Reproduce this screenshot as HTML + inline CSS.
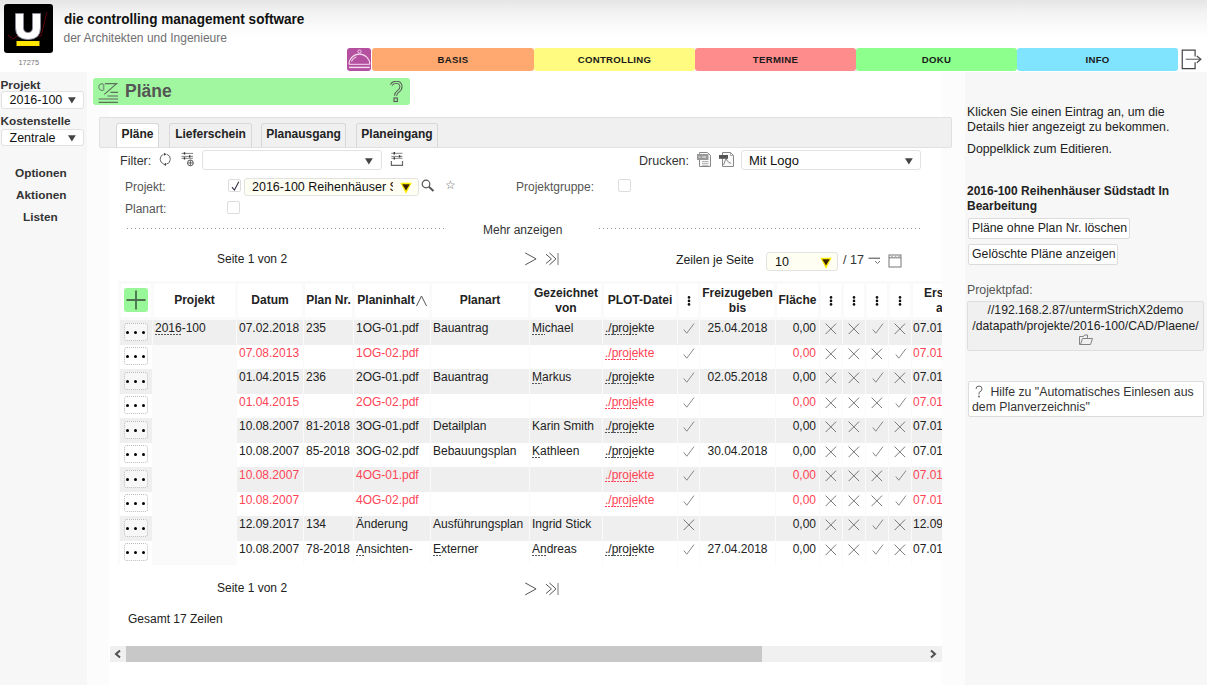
<!DOCTYPE html><html><head><meta charset="utf-8"><style>
*{box-sizing:border-box;margin:0;padding:0}
html,body{width:1207px;height:685px;overflow:hidden;background:#fff}
body{font-family:"Liberation Sans",sans-serif;font-size:12px;color:#222;position:relative}
.a{position:absolute;white-space:nowrap}
#hdr{position:absolute;left:0;top:0;width:1207px;height:76px;background:linear-gradient(#e5e5e5 0px,#f2f2f2 12px,#fbfbfb 28px,#fff 40px)}
#logo{position:absolute;left:4px;top:4px;width:49px;height:49px;background:#000;border-radius:3px;overflow:hidden}
.ttl{font-weight:bold;font-size:15.5px;color:#111;transform-origin:0 0;transform:scaleX(0.875)}
.sub{font-size:12px;color:#707070}
.nt{position:absolute;top:48px;height:23px;border-radius:3px;font-weight:bold;font-size:9.6px;color:#1a1a1a;text-align:center;line-height:24px;letter-spacing:0.3px}
.sel{position:absolute;background:#fff;border:1px solid #e2e2e2;border-radius:3px;font-size:13px;color:#111}
.sb{font-weight:bold;font-size:11.8px;color:#333;z-index:2}
.tab{position:absolute;top:4.5px;height:24.5px;border:1px solid #d8d8d8;border-bottom:none;border-radius:3px 3px 0 0;background:#f0f0f0;font-weight:bold;font-size:12px;color:#222;text-align:center;line-height:20px}
.btn{position:absolute;background:#fff;border:1px solid #dcdcdc;border-radius:2px;font-size:12.3px;color:#222;line-height:18px;padding-left:3px;white-space:nowrap}
.lbl{position:absolute;white-space:nowrap;font-size:12px;color:#555}
.cb{position:absolute;width:13px;height:13px;border:1px solid #ddd;border-radius:2px;background:#fff}
.dl{position:absolute;height:1px;background:repeating-linear-gradient(90deg,#999 0 1px,transparent 1px 4px)}
.tc{position:absolute;overflow:hidden;white-space:nowrap}
.hc{position:absolute;background:#fff;font-weight:bold;font-size:12px;color:#222;text-align:center;line-height:15px;display:flex;align-items:center;justify-content:center}
.red{color:#ff4455}
.u{background:repeating-linear-gradient(90deg,#555 0 2px,transparent 2px 3px) 0 100%/100% 1px no-repeat}
.red .u{background-image:repeating-linear-gradient(90deg,#ff4455 0 2px,transparent 2px 3px)}
.dots{position:absolute;width:24px;height:18px;border:1px dotted #bbb;border-radius:3px;background:#fff}
.dots i{position:absolute;top:7px;width:3.2px;height:3.2px;border-radius:50%;background:#000}
</style></head><body>
<div id="hdr"></div>
<div id="logo"><svg width="49" height="49" viewBox="0 0 49 49">
<polyline points="4,31 9,35 15,31 24,29 31,31 37,32 43,8" fill="none" stroke="#7a0010" stroke-width="0.8"/>
<path d="M11.5 9.5 h8 v14 q0 5 4.5 5 q4.5 0 4.5-5 v-14 h8 v14 q0 12 -12.5 12 q-12.5 0 -12.5 -12z" fill="#fff" stroke="#8a8a9a" stroke-width="0.9"/>
<rect x="12.5" y="37" width="23" height="5" fill="#ffe600"/>
</svg></div>
<div class="a" style="left:18.5px;top:57.5px;font-size:7.4px;color:#777">17275</div>
<div class="a ttl" style="left:63.5px;top:9.7px">die controlling management software</div>
<div class="a sub" style="left:63.5px;top:31px">der Architekten und Ingenieure</div>
<div class="nt" style="left:347px;width:24px;background:#b54fa0"><svg width="24" height="23" viewBox="0 0 24 23" style="position:absolute;left:0;top:0"><path d="M2 16.3 A10.4 10.2 0 0 1 22.8 16.3" fill="none" stroke="#f3ddee" stroke-width="1.1"/><line x1="2" y1="16.3" x2="22.8" y2="16.3" stroke="#f3ddee" stroke-width="1"/><line x1="2" y1="19.4" x2="22.8" y2="19.4" stroke="#f3ddee" stroke-width="1.4"/><circle cx="12.5" cy="3.6" r="1.6" fill="none" stroke="#f3ddee" stroke-width="0.9"/><path d="M4.4 13.4 A8 8 0 0 1 9.3 8.8" fill="none" stroke="#e8c0e0" stroke-width="1.3"/></svg></div>
<div class="nt" style="left:372px;width:162px;background:#ffa870">BASIS</div>
<div class="nt" style="left:534px;width:161px;background:#fffb80">CONTROLLING</div>
<div class="nt" style="left:695px;width:161px;background:#ff8c8c">TERMINE</div>
<div class="nt" style="left:856px;width:161px;background:#8cff8c">DOKU</div>
<div class="nt" style="left:1017px;width:161px;background:#80e4ff">INFO</div>
<svg class="a" style="left:1181px;top:49px" width="22" height="22" viewBox="0 0 22 22"><path d="M14.1 7.6 V1.2 H1.25 V19.6 H14.1 V13.2" fill="none" stroke="#444" stroke-width="1.2"/><line x1="4.75" y1="10.25" x2="19.6" y2="10.25" stroke="#666" stroke-width="1.1"/><path d="M15.8 7 L19.9 10.25 L15.8 13.75" fill="none" stroke="#444" stroke-width="1.1"/></svg>
<div class="a" style="left:0;top:72px;width:87px;height:613px;background:#f7f7f7"></div>
<div class="a" style="left:87px;top:72px;width:22px;height:613px;background:#fcfcfc"></div>
<div class="a" style="left:942px;top:72px;width:23px;height:613px;background:#fcfcfc"></div>
<div class="a" style="left:965px;top:72px;width:242px;height:613px;background:#f7f7f7"></div>
<div class="a sb" style="left:0.5px;top:77.5px">Projekt</div>
<div class="sel" style="left:0.5px;top:91px;width:83px;height:17.5px;font-size:12.5px"><span class="a" style="left:8px;top:1px">2016-100</span><svg class="a" style="left:66px;top:5px" width="8" height="7" viewBox="0 0 8 7"><path d="M0 0.2 H7.8 L3.9 6.6z" fill="#444"/></svg></div>
<div class="a sb" style="left:0.5px;top:113.5px">Kostenstelle</div>
<div class="sel" style="left:0.5px;top:128.5px;width:83px;height:17.5px;font-size:12.5px"><span class="a" style="left:8px;top:1px">Zentrale</span><svg class="a" style="left:66px;top:5px" width="8" height="7" viewBox="0 0 8 7"><path d="M0 0.2 H7.8 L3.9 6.6z" fill="#444"/></svg></div>
<div class="a sb" style="left:15px;top:166px">Optionen</div>
<div class="a sb" style="left:16px;top:188px">Aktionen</div>
<div class="a sb" style="left:23px;top:210px">Listen</div>
<div class="a" style="left:93px;top:78px;width:317px;height:27px;background:#a0f7a0;border-radius:3px">
<svg class="a" style="left:0;top:0" width="30" height="27" viewBox="0 0 30 27"><path d="M12 5.6 H23.6 L11.3 16.4" fill="none" stroke="#5c705c" stroke-width="1.2"/><path d="M10.6 5.8 V12.6" stroke="#7c9a7c" stroke-width="1.6"/><path d="M9.8 5.6 A3.9 3.4 0 0 0 9.8 12.6" fill="none" stroke="#6c846c" stroke-width="1.1"/><path d="M17.4 14.4 H25 M5.6 24.4 H25" stroke="#5c705c" stroke-width="1.1"/><path d="M14.4 17.9 H25 M5.6 20.9 H25" stroke="#789478" stroke-width="1.5"/></svg>
<div class="a" style="left:32px;top:3px;font-size:17.5px;font-weight:bold;color:#555">Pläne</div>
<svg class="a" style="left:296px;top:3px" width="14" height="22" viewBox="0 0 14 22"><path d="M2.2 4 Q4 1.3 7 1.3 Q12 1.3 12 5.8 Q12 8.5 9 10.5 Q6.6 12.2 6.6 14.8" fill="none" stroke="#555" stroke-width="3.1"/><path d="M2.2 4 Q4 1.3 7 1.3 Q12 1.3 12 5.8 Q12 8.5 9 10.5 Q6.6 12.2 6.6 14.8" fill="none" stroke="#a0f7a0" stroke-width="1.2"/><rect x="5" y="17" width="3.3" height="3.5" fill="#a0f7a0" stroke="#555" stroke-width="1.1"/></svg>
</div>
<div class="a" style="left:99px;top:117px;width:853px;height:31px;background:#f0f0f0;border:1px solid #e0e0e0;border-radius:2px">
<div class="tab" style="left:16px;width:43px;background:#fff">Pläne</div>
<div class="tab" style="left:69px;width:83px">Lieferschein</div>
<div class="tab" style="left:161px;width:85px">Planausgang</div>
<div class="tab" style="left:256px;width:82px">Planeingang</div>
</div>
<div class="a" style="left:120px;top:153.5px;font-size:12.5px;color:#333">Filter:</div>
<svg class="a" style="left:158px;top:152px" width="14" height="15" viewBox="0 0 14 15"><path d="M5.5 2.3 A5.2 5.2 0 0 0 5.8 12.1 M8.8 2.2 A5.2 5.2 0 0 1 8.3 12.2" fill="none" stroke="#666" stroke-width="1"/><path d="M6 0.8 L8.5 2.3 L6 3.8z M8 10.8 L5.6 12.5 L8 14z" fill="#444"/></svg>
<svg class="a" style="left:181px;top:151px" width="14" height="16" viewBox="0 0 14 16"><path d="M0.5 2.4 H12 M0.5 5.4 H12 M0.5 7.3 H12" stroke="#777" stroke-width="0.9"/><path d="M3.5 1.2 V3.6 M8.7 4.2 V6.5 M3.5 6.2 V8.6" stroke="#333" stroke-width="1.4"/><circle cx="9.4" cy="11.9" r="2.9" fill="#fff" stroke="#555" stroke-width="1"/><path d="M9.4 9.3 V14.5 M6.8 11.9 H12" stroke="#555" stroke-width="0.9"/></svg>
<div class="sel" style="left:202px;top:150px;width:180px;height:20px"><svg class="a" style="left:162px;top:6.5px" width="8" height="7" viewBox="0 0 8 7"><path d="M0 0.2 H7.8 L3.9 6.6z" fill="#444"/></svg></div>
<svg class="a" style="left:390px;top:151px" width="14" height="16" viewBox="0 0 14 16"><path d="M1.3 2.3 H12.5 M1.3 5.4 H12.5 M1.3 7.3 H12.5" stroke="#777" stroke-width="0.9"/><path d="M4.3 1.1 V3.5 M9.6 4.2 V6.5 M4.3 6.2 V8.6" stroke="#333" stroke-width="1.4"/><path d="M1.4 10 V14.4 H12.5 V10" fill="none" stroke="#666" stroke-width="1.2"/></svg>
<div class="a" style="left:639px;top:154px;font-size:12.5px;color:#333">Drucken:</div>
<svg class="a" style="left:696px;top:151px" width="16" height="17" viewBox="0 0 16 17"><path d="M3.5 1.5 H11.5 L14.5 4.5 V15.5 H3.5z" fill="#fafafa" stroke="#888" stroke-width="1"/><rect x="1" y="3" width="11.5" height="6" fill="#999"/><path d="M2.5 6 h2 M6 6 h2 M9 5 v2" stroke="#eee" stroke-width="1.2"/><path d="M6 10.5 H12.5 M6 12.4 H12.5 M6 14.3 H12.5" stroke="#aaa" stroke-width="0.9"/></svg>
<svg class="a" style="left:718px;top:151px" width="17" height="17" viewBox="0 0 17 17"><path d="M4.5 1.5 H12.5 L15.5 4.5 V15.5 H4.5z" fill="#fafafa" stroke="#888" stroke-width="1"/><path d="M12.5 1.5 V4.5 H15.5" fill="none" stroke="#999" stroke-width="0.8"/><rect x="1" y="4" width="9" height="3.8" fill="#555"/><path d="M5.5 14 Q7.5 9 8 7.5 Q9 11 13 12.5" fill="none" stroke="#777" stroke-width="0.9"/></svg>
<div class="sel" style="left:741px;top:150px;width:180px;height:20px"><span class="a" style="left:7px;top:2px;font-size:13px">Mit Logo</span><svg class="a" style="left:162.5px;top:6.5px" width="8" height="7" viewBox="0 0 8 7"><path d="M0 0.2 H7.8 L3.9 6.6z" fill="#444"/></svg></div>
<div class="lbl" style="left:125px;top:180px">Projekt:</div>
<div class="cb" style="left:227.5px;top:179.3px"><svg class="a" style="left:-1px;top:-1px" width="14" height="14" viewBox="0 0 14 14"><path d="M4 8.2 L6.4 11 L10.8 2.8" fill="none" stroke="#334" stroke-width="1.1"/></svg></div>
<div class="sel" style="left:243.5px;top:178px;width:175.5px;height:17.5px;background:#fffef2;overflow:hidden"><span class="a" style="left:7.5px;top:1px;font-size:12.5px;color:#111">2016-100 Reihenhäuser Südstadt</span><span class="a" style="left:148px;top:0;width:26px;height:20px;background:#fffef2"></span><svg class="a" style="left:155.5px;top:2.5px" width="12" height="12" viewBox="0 0 12 12"><path d="M0.3 0.8 H11.7 L6 11.8z" fill="#ffee00"/><path d="M2.2 2.2 H9.8 L6 8.6z" fill="#3a2400"/></svg></div>
<svg class="a" style="left:421px;top:179px" width="14" height="13" viewBox="0 0 14 13"><circle cx="5" cy="5" r="3.8" fill="none" stroke="#555" stroke-width="1.2"/><path d="M7.8 7.8 L12.5 12" stroke="#555" stroke-width="2"/></svg>
<div class="a" style="left:445px;top:178px;font-size:12px;color:#666">&#9734;</div>
<div class="lbl" style="left:516px;top:180px">Projektgruppe:</div>
<div class="cb" style="left:618px;top:179px"></div>
<div class="lbl" style="left:125px;top:202px">Planart:</div>
<div class="cb" style="left:227px;top:201px"></div>
<div class="dl" style="left:127px;top:228px;width:320px"></div>
<div class="a" style="left:483px;top:223px;font-size:12px;color:#333">Mehr anzeigen</div>
<div class="dl" style="left:599px;top:228px;width:322px"></div>
<div class="a" style="left:217px;top:252px;font-size:12px;color:#222">Seite 1 von 2</div>
<svg class="a" style="left:522px;top:252.2px" width="40" height="15" viewBox="0 0 40 15"><path d="M3.2 0.9 L14.1 6.9 L3.2 12.9" fill="none" stroke="#555" stroke-width="1"/><path d="M24 2.2 L29.4 6.9 L24 11.5 M27.4 0.9 L34 6.9 L27.4 12.9" fill="none" stroke="#555" stroke-width="1"/><path d="M36 0.9 V12.9" stroke="#aaa" stroke-width="1.6"/></svg>
<div class="a" style="left:676px;top:253px;font-size:12.3px;color:#222">Zeilen je Seite</div>
<div class="sel" style="left:766px;top:252px;width:72px;height:19px;background:#fffef2"><span class="a" style="left:8px;top:2px;font-size:12.5px;color:#111">10</span><svg class="a" style="left:53px;top:4px" width="12" height="12" viewBox="0 0 12 12"><path d="M0.3 0.8 H11.7 L6 11.8z" fill="#ffee00"/><path d="M2.2 2.2 H9.8 L6 8.6z" fill="#3a2400"/></svg></div>
<div class="a" style="left:843px;top:253px;font-size:12.5px;color:#333">/ 17</div>
<svg class="a" style="left:868px;top:256px" width="13" height="9" viewBox="0 0 13 9"><path d="M0.5 2.2 H12" stroke="#444" stroke-width="1"/><path d="M7 5 L9.5 7.5 L12 5" fill="none" stroke="#666" stroke-width="0.9"/></svg>
<svg class="a" style="left:888px;top:254px" width="14" height="14" viewBox="0 0 14 14"><rect x="1" y="1" width="12" height="12" fill="none" stroke="#777" stroke-width="1"/><path d="M1 3.8 H13" stroke="#777"/><path d="M3 2.3 H5 M6.5 2.3 H8.5 M10 2.3 H12" stroke="#aaa"/></svg>
<div class="a" style="left:110px;top:240px;width:832px;height:420px;overflow:hidden">
<div class="a" style="left:8px;top:41px;width:900px;height:284px;background:#fafafa"></div>
<div class="hc" style="left:11px;top:44px;width:30px;height:33px;"></div>
<div class="hc" style="left:44px;top:44px;width:81px;height:33px;">Projekt</div>
<div class="hc" style="left:128px;top:44px;width:64px;height:33px;">Datum</div>
<div class="hc" style="left:195px;top:44px;width:47px;height:33px;">Plan Nr.</div>
<div class="hc" style="left:245px;top:44px;width:74px;height:33px;">Planinhalt <svg width="11" height="11" viewBox="0 0 11 11" style="margin-left:1px"><path d="M0.5 11 L5.5 1 L10.5 11" fill="none" stroke="#555" stroke-width="1"/></svg></div>
<div class="hc" style="left:322px;top:44px;width:96px;height:33px;">Planart</div>
<div class="hc" style="left:421px;top:44px;width:70px;height:33px;">Gezeichnet<br>von</div>
<div class="hc" style="left:494px;top:44px;width:72px;height:33px;">PLOT-Datei</div>
<div class="hc" style="left:569px;top:44px;width:19px;height:33px;"><svg width="4" height="10" viewBox="0 0 4 10"><circle cx="2" cy="1.4" r="1.3" fill="#111"/><circle cx="2" cy="4.9" r="1.3" fill="#111"/><circle cx="2" cy="8.4" r="1.3" fill="#111"/></svg></div>
<div class="hc" style="left:591px;top:44px;width:73px;height:33px;">Freizugeben<br>bis</div>
<div class="hc" style="left:667px;top:44px;width:41px;height:33px;">Fläche</div>
<div class="hc" style="left:711px;top:44px;width:20px;height:33px;"><svg width="4" height="10" viewBox="0 0 4 10"><circle cx="2" cy="1.4" r="1.3" fill="#111"/><circle cx="2" cy="4.9" r="1.3" fill="#111"/><circle cx="2" cy="8.4" r="1.3" fill="#111"/></svg></div>
<div class="hc" style="left:734px;top:44px;width:20px;height:33px;"><svg width="4" height="10" viewBox="0 0 4 10"><circle cx="2" cy="1.4" r="1.3" fill="#111"/><circle cx="2" cy="4.9" r="1.3" fill="#111"/><circle cx="2" cy="8.4" r="1.3" fill="#111"/></svg></div>
<div class="hc" style="left:757px;top:44px;width:20px;height:33px;"><svg width="4" height="10" viewBox="0 0 4 10"><circle cx="2" cy="1.4" r="1.3" fill="#111"/><circle cx="2" cy="4.9" r="1.3" fill="#111"/><circle cx="2" cy="8.4" r="1.3" fill="#111"/></svg></div>
<div class="hc" style="left:780px;top:44px;width:20px;height:33px;"><svg width="4" height="10" viewBox="0 0 4 10"><circle cx="2" cy="1.4" r="1.3" fill="#111"/><circle cx="2" cy="4.9" r="1.3" fill="#111"/><circle cx="2" cy="8.4" r="1.3" fill="#111"/></svg></div>
<div class="hc" style="left:803px;top:44px;width:38px;height:33px;justify-content:flex-start;text-align:right;"></div>
<div class="a" style="left:814px;top:46px;font-weight:bold;font-size:12px;line-height:15px;color:#222">Ers</div><div class="a" style="left:826px;top:61px;font-weight:bold;font-size:12px;line-height:15px;color:#222">a</div>
<div class="a" style="left:14px;top:48px;width:24px;height:24px;background:#98f798;border-radius:3px"><svg width="24" height="24" viewBox="0 0 24 24" style="position:absolute;left:0;top:0"><path d="M12 2.5 v19 M2.5 12 h19" stroke="#4d6e4d" stroke-width="1.8"/></svg></div>
<div class="tc" style="left:10px;top:80.0px;width:32px;height:24.5px;background:#efefef"></div>
<div class="tc" style="left:43px;top:80.0px;width:83px;height:24.5px;background:#efefef"></div>
<div class="tc" style="left:127px;top:80.0px;width:66px;height:24.5px;background:#efefef"></div>
<div class="tc" style="left:194px;top:80.0px;width:49px;height:24.5px;background:#efefef"></div>
<div class="tc" style="left:244px;top:80.0px;width:76px;height:24.5px;background:#efefef"></div>
<div class="tc" style="left:321px;top:80.0px;width:98px;height:24.5px;background:#efefef"></div>
<div class="tc" style="left:420px;top:80.0px;width:72px;height:24.5px;background:#efefef"></div>
<div class="tc" style="left:493px;top:80.0px;width:74px;height:24.5px;background:#efefef"></div>
<div class="tc" style="left:568px;top:80.0px;width:21px;height:24.5px;background:#efefef"></div>
<div class="tc" style="left:590px;top:80.0px;width:75px;height:24.5px;background:#efefef"></div>
<div class="tc" style="left:666px;top:80.0px;width:43px;height:24.5px;background:#efefef"></div>
<div class="tc" style="left:710px;top:80.0px;width:22px;height:24.5px;background:#efefef"></div>
<div class="tc" style="left:733px;top:80.0px;width:22px;height:24.5px;background:#efefef"></div>
<div class="tc" style="left:756px;top:80.0px;width:22px;height:24.5px;background:#efefef"></div>
<div class="tc" style="left:779px;top:80.0px;width:22px;height:24.5px;background:#efefef"></div>
<div class="tc" style="left:802px;top:80.0px;width:40px;height:24.5px;background:#efefef"></div>
<div class="dots" style="left:14px;top:82.5px;background:#f7f7f7"><i style="left:1.2px"></i><i style="left:9.2px"></i><i style="left:17.2px"></i></div>
<div class="tc" style="left:43px;top:80.0px;width:83px;height:24px;padding:1px 2px 0 2px;font-size:12px;line-height:14px;"><span class="u">2016</span>-100</div>
<div class="tc" style="left:127px;top:80.0px;width:66px;height:24px;padding:1px 2px 0 2px;font-size:12px;line-height:14px;">07.02.2018</div>
<div class="tc" style="left:194px;top:80.0px;width:49px;height:24px;padding:1px 2px 0 2px;font-size:12px;line-height:14px;">235</div>
<div class="tc" style="left:244px;top:80.0px;width:76px;height:24px;padding:1px 2px 0 2px;font-size:12px;line-height:14px;">1OG-01.pdf</div>
<div class="tc" style="left:321px;top:80.0px;width:98px;height:24px;padding:1px 2px 0 2px;font-size:12px;line-height:14px;">Bauantrag</div>
<div class="tc" style="left:420px;top:80.0px;width:72px;height:24px;padding:1px 2px 0 2px;font-size:12px;line-height:14px;"><span class="u">Mi</span>chael</div>
<div class="tc" style="left:493px;top:80.0px;width:74px;height:24px;padding:1px 2px 0 2px;font-size:12px;line-height:14px;"><span class="u">./proje</span>kte</div>
<div class="a" style="left:573.0px;top:83.19999999999999px;width:12px;height:11px;line-height:0"><svg width="12" height="11" viewBox="0 0 12 11"><path d="M0.8 6.5 L3.8 10.2 L11 0.6" fill="none" stroke="#7a7a7a" stroke-width="0.9"/></svg></div>
<div class="tc" style="left:590px;top:80.0px;width:75px;height:24px;padding:1px 2px 0 2px;font-size:12px;line-height:14px;text-align:center;">25.04.2018</div>
<div class="tc" style="left:666px;top:80.0px;width:43px;height:24px;padding:1px 2px 0 2px;font-size:12px;line-height:14px;text-align:right;padding-right:3px;">0,00</div>
<div class="a" style="left:715.25px;top:83.19999999999999px;width:12px;height:12px;line-height:0"><svg width="12" height="12" viewBox="0 0 12 12"><path d="M0.6 0.6 L11.1 11.1 M11.1 0.6 L0.6 11.1" fill="none" stroke="#6a6a6a" stroke-width="0.9"/></svg></div>
<div class="a" style="left:738.25px;top:83.19999999999999px;width:12px;height:12px;line-height:0"><svg width="12" height="12" viewBox="0 0 12 12"><path d="M0.6 0.6 L11.1 11.1 M11.1 0.6 L0.6 11.1" fill="none" stroke="#6a6a6a" stroke-width="0.9"/></svg></div>
<div class="a" style="left:761.5px;top:83.19999999999999px;width:12px;height:11px;line-height:0"><svg width="12" height="11" viewBox="0 0 12 11"><path d="M0.8 6.5 L3.8 10.2 L11 0.6" fill="none" stroke="#7a7a7a" stroke-width="0.9"/></svg></div>
<div class="a" style="left:784.25px;top:83.19999999999999px;width:12px;height:12px;line-height:0"><svg width="12" height="12" viewBox="0 0 12 12"><path d="M0.6 0.6 L11.1 11.1 M11.1 0.6 L0.6 11.1" fill="none" stroke="#6a6a6a" stroke-width="0.9"/></svg></div>
<div class="tc" style="left:802px;top:80.0px;width:40px;height:24px;padding:1px 2px 0 2px;font-size:12px;line-height:14px;padding-left:1px;">07.01</div>
<div class="tc" style="left:10px;top:104.5px;width:32px;height:24.5px;background:#fff"></div>
<div class="tc" style="left:127px;top:104.5px;width:66px;height:24.5px;background:#fff"></div>
<div class="tc" style="left:194px;top:104.5px;width:49px;height:24.5px;background:#fff"></div>
<div class="tc" style="left:244px;top:104.5px;width:76px;height:24.5px;background:#fff"></div>
<div class="tc" style="left:321px;top:104.5px;width:98px;height:24.5px;background:#fff"></div>
<div class="tc" style="left:420px;top:104.5px;width:72px;height:24.5px;background:#fff"></div>
<div class="tc" style="left:493px;top:104.5px;width:74px;height:24.5px;background:#fff"></div>
<div class="tc" style="left:568px;top:104.5px;width:21px;height:24.5px;background:#fff"></div>
<div class="tc" style="left:590px;top:104.5px;width:75px;height:24.5px;background:#fff"></div>
<div class="tc" style="left:666px;top:104.5px;width:43px;height:24.5px;background:#fff"></div>
<div class="tc" style="left:710px;top:104.5px;width:22px;height:24.5px;background:#fff"></div>
<div class="tc" style="left:733px;top:104.5px;width:22px;height:24.5px;background:#fff"></div>
<div class="tc" style="left:756px;top:104.5px;width:22px;height:24.5px;background:#fff"></div>
<div class="tc" style="left:779px;top:104.5px;width:22px;height:24.5px;background:#fff"></div>
<div class="tc" style="left:802px;top:104.5px;width:40px;height:24.5px;background:#fff"></div>
<div class="dots" style="left:14px;top:107.0px;background:#fff"><i style="left:1.2px"></i><i style="left:9.2px"></i><i style="left:17.2px"></i></div>
<div class="tc red" style="left:127px;top:104.5px;width:66px;height:24px;padding:1px 2px 0 2px;font-size:12px;line-height:14px;">07.08.2013</div>
<div class="tc red" style="left:244px;top:104.5px;width:76px;height:24px;padding:1px 2px 0 2px;font-size:12px;line-height:14px;">1OG-02.pdf</div>
<div class="tc red" style="left:493px;top:104.5px;width:74px;height:24px;padding:1px 2px 0 2px;font-size:12px;line-height:14px;"><span class="u">./proje</span>kte</div>
<div class="a" style="left:573.0px;top:107.69999999999999px;width:12px;height:11px;line-height:0"><svg width="12" height="11" viewBox="0 0 12 11"><path d="M0.8 6.5 L3.8 10.2 L11 0.6" fill="none" stroke="#7a7a7a" stroke-width="0.9"/></svg></div>
<div class="tc red" style="left:666px;top:104.5px;width:43px;height:24px;padding:1px 2px 0 2px;font-size:12px;line-height:14px;text-align:right;padding-right:3px;">0,00</div>
<div class="a" style="left:715.25px;top:107.69999999999999px;width:12px;height:12px;line-height:0"><svg width="12" height="12" viewBox="0 0 12 12"><path d="M0.6 0.6 L11.1 11.1 M11.1 0.6 L0.6 11.1" fill="none" stroke="#6a6a6a" stroke-width="0.9"/></svg></div>
<div class="a" style="left:738.25px;top:107.69999999999999px;width:12px;height:12px;line-height:0"><svg width="12" height="12" viewBox="0 0 12 12"><path d="M0.6 0.6 L11.1 11.1 M11.1 0.6 L0.6 11.1" fill="none" stroke="#6a6a6a" stroke-width="0.9"/></svg></div>
<div class="a" style="left:761.25px;top:107.69999999999999px;width:12px;height:12px;line-height:0"><svg width="12" height="12" viewBox="0 0 12 12"><path d="M0.6 0.6 L11.1 11.1 M11.1 0.6 L0.6 11.1" fill="none" stroke="#6a6a6a" stroke-width="0.9"/></svg></div>
<div class="a" style="left:784.5px;top:107.69999999999999px;width:12px;height:11px;line-height:0"><svg width="12" height="11" viewBox="0 0 12 11"><path d="M0.8 6.5 L3.8 10.2 L11 0.6" fill="none" stroke="#7a7a7a" stroke-width="0.9"/></svg></div>
<div class="tc red" style="left:802px;top:104.5px;width:40px;height:24px;padding:1px 2px 0 2px;font-size:12px;line-height:14px;padding-left:1px;">07.01</div>
<div class="tc" style="left:10px;top:129.0px;width:32px;height:24.5px;background:#efefef"></div>
<div class="tc" style="left:127px;top:129.0px;width:66px;height:24.5px;background:#efefef"></div>
<div class="tc" style="left:194px;top:129.0px;width:49px;height:24.5px;background:#efefef"></div>
<div class="tc" style="left:244px;top:129.0px;width:76px;height:24.5px;background:#efefef"></div>
<div class="tc" style="left:321px;top:129.0px;width:98px;height:24.5px;background:#efefef"></div>
<div class="tc" style="left:420px;top:129.0px;width:72px;height:24.5px;background:#efefef"></div>
<div class="tc" style="left:493px;top:129.0px;width:74px;height:24.5px;background:#efefef"></div>
<div class="tc" style="left:568px;top:129.0px;width:21px;height:24.5px;background:#efefef"></div>
<div class="tc" style="left:590px;top:129.0px;width:75px;height:24.5px;background:#efefef"></div>
<div class="tc" style="left:666px;top:129.0px;width:43px;height:24.5px;background:#efefef"></div>
<div class="tc" style="left:710px;top:129.0px;width:22px;height:24.5px;background:#efefef"></div>
<div class="tc" style="left:733px;top:129.0px;width:22px;height:24.5px;background:#efefef"></div>
<div class="tc" style="left:756px;top:129.0px;width:22px;height:24.5px;background:#efefef"></div>
<div class="tc" style="left:779px;top:129.0px;width:22px;height:24.5px;background:#efefef"></div>
<div class="tc" style="left:802px;top:129.0px;width:40px;height:24.5px;background:#efefef"></div>
<div class="dots" style="left:14px;top:131.5px;background:#f7f7f7"><i style="left:1.2px"></i><i style="left:9.2px"></i><i style="left:17.2px"></i></div>
<div class="tc" style="left:127px;top:129.0px;width:66px;height:24px;padding:1px 2px 0 2px;font-size:12px;line-height:14px;">01.04.2015</div>
<div class="tc" style="left:194px;top:129.0px;width:49px;height:24px;padding:1px 2px 0 2px;font-size:12px;line-height:14px;">236</div>
<div class="tc" style="left:244px;top:129.0px;width:76px;height:24px;padding:1px 2px 0 2px;font-size:12px;line-height:14px;">2OG-01.pdf</div>
<div class="tc" style="left:321px;top:129.0px;width:98px;height:24px;padding:1px 2px 0 2px;font-size:12px;line-height:14px;">Bauantrag</div>
<div class="tc" style="left:420px;top:129.0px;width:72px;height:24px;padding:1px 2px 0 2px;font-size:12px;line-height:14px;"><span class="u">M</span>arkus</div>
<div class="tc" style="left:493px;top:129.0px;width:74px;height:24px;padding:1px 2px 0 2px;font-size:12px;line-height:14px;"><span class="u">./proje</span>kte</div>
<div class="a" style="left:573.0px;top:132.2px;width:12px;height:11px;line-height:0"><svg width="12" height="11" viewBox="0 0 12 11"><path d="M0.8 6.5 L3.8 10.2 L11 0.6" fill="none" stroke="#7a7a7a" stroke-width="0.9"/></svg></div>
<div class="tc" style="left:590px;top:129.0px;width:75px;height:24px;padding:1px 2px 0 2px;font-size:12px;line-height:14px;text-align:center;">02.05.2018</div>
<div class="tc" style="left:666px;top:129.0px;width:43px;height:24px;padding:1px 2px 0 2px;font-size:12px;line-height:14px;text-align:right;padding-right:3px;">0,00</div>
<div class="a" style="left:715.25px;top:132.2px;width:12px;height:12px;line-height:0"><svg width="12" height="12" viewBox="0 0 12 12"><path d="M0.6 0.6 L11.1 11.1 M11.1 0.6 L0.6 11.1" fill="none" stroke="#6a6a6a" stroke-width="0.9"/></svg></div>
<div class="a" style="left:738.25px;top:132.2px;width:12px;height:12px;line-height:0"><svg width="12" height="12" viewBox="0 0 12 12"><path d="M0.6 0.6 L11.1 11.1 M11.1 0.6 L0.6 11.1" fill="none" stroke="#6a6a6a" stroke-width="0.9"/></svg></div>
<div class="a" style="left:761.5px;top:132.2px;width:12px;height:11px;line-height:0"><svg width="12" height="11" viewBox="0 0 12 11"><path d="M0.8 6.5 L3.8 10.2 L11 0.6" fill="none" stroke="#7a7a7a" stroke-width="0.9"/></svg></div>
<div class="a" style="left:784.25px;top:132.2px;width:12px;height:12px;line-height:0"><svg width="12" height="12" viewBox="0 0 12 12"><path d="M0.6 0.6 L11.1 11.1 M11.1 0.6 L0.6 11.1" fill="none" stroke="#6a6a6a" stroke-width="0.9"/></svg></div>
<div class="tc" style="left:802px;top:129.0px;width:40px;height:24px;padding:1px 2px 0 2px;font-size:12px;line-height:14px;padding-left:1px;">07.01</div>
<div class="tc" style="left:10px;top:153.5px;width:32px;height:24.5px;background:#fff"></div>
<div class="tc" style="left:127px;top:153.5px;width:66px;height:24.5px;background:#fff"></div>
<div class="tc" style="left:194px;top:153.5px;width:49px;height:24.5px;background:#fff"></div>
<div class="tc" style="left:244px;top:153.5px;width:76px;height:24.5px;background:#fff"></div>
<div class="tc" style="left:321px;top:153.5px;width:98px;height:24.5px;background:#fff"></div>
<div class="tc" style="left:420px;top:153.5px;width:72px;height:24.5px;background:#fff"></div>
<div class="tc" style="left:493px;top:153.5px;width:74px;height:24.5px;background:#fff"></div>
<div class="tc" style="left:568px;top:153.5px;width:21px;height:24.5px;background:#fff"></div>
<div class="tc" style="left:590px;top:153.5px;width:75px;height:24.5px;background:#fff"></div>
<div class="tc" style="left:666px;top:153.5px;width:43px;height:24.5px;background:#fff"></div>
<div class="tc" style="left:710px;top:153.5px;width:22px;height:24.5px;background:#fff"></div>
<div class="tc" style="left:733px;top:153.5px;width:22px;height:24.5px;background:#fff"></div>
<div class="tc" style="left:756px;top:153.5px;width:22px;height:24.5px;background:#fff"></div>
<div class="tc" style="left:779px;top:153.5px;width:22px;height:24.5px;background:#fff"></div>
<div class="tc" style="left:802px;top:153.5px;width:40px;height:24.5px;background:#fff"></div>
<div class="dots" style="left:14px;top:156.0px;background:#fff"><i style="left:1.2px"></i><i style="left:9.2px"></i><i style="left:17.2px"></i></div>
<div class="tc red" style="left:127px;top:153.5px;width:66px;height:24px;padding:1px 2px 0 2px;font-size:12px;line-height:14px;">01.04.2015</div>
<div class="tc red" style="left:244px;top:153.5px;width:76px;height:24px;padding:1px 2px 0 2px;font-size:12px;line-height:14px;">2OG-02.pdf</div>
<div class="tc red" style="left:493px;top:153.5px;width:74px;height:24px;padding:1px 2px 0 2px;font-size:12px;line-height:14px;"><span class="u">./proje</span>kte</div>
<div class="a" style="left:573.0px;top:156.7px;width:12px;height:11px;line-height:0"><svg width="12" height="11" viewBox="0 0 12 11"><path d="M0.8 6.5 L3.8 10.2 L11 0.6" fill="none" stroke="#7a7a7a" stroke-width="0.9"/></svg></div>
<div class="tc red" style="left:666px;top:153.5px;width:43px;height:24px;padding:1px 2px 0 2px;font-size:12px;line-height:14px;text-align:right;padding-right:3px;">0,00</div>
<div class="a" style="left:715.25px;top:156.7px;width:12px;height:12px;line-height:0"><svg width="12" height="12" viewBox="0 0 12 12"><path d="M0.6 0.6 L11.1 11.1 M11.1 0.6 L0.6 11.1" fill="none" stroke="#6a6a6a" stroke-width="0.9"/></svg></div>
<div class="a" style="left:738.25px;top:156.7px;width:12px;height:12px;line-height:0"><svg width="12" height="12" viewBox="0 0 12 12"><path d="M0.6 0.6 L11.1 11.1 M11.1 0.6 L0.6 11.1" fill="none" stroke="#6a6a6a" stroke-width="0.9"/></svg></div>
<div class="a" style="left:761.25px;top:156.7px;width:12px;height:12px;line-height:0"><svg width="12" height="12" viewBox="0 0 12 12"><path d="M0.6 0.6 L11.1 11.1 M11.1 0.6 L0.6 11.1" fill="none" stroke="#6a6a6a" stroke-width="0.9"/></svg></div>
<div class="a" style="left:784.5px;top:156.7px;width:12px;height:11px;line-height:0"><svg width="12" height="11" viewBox="0 0 12 11"><path d="M0.8 6.5 L3.8 10.2 L11 0.6" fill="none" stroke="#7a7a7a" stroke-width="0.9"/></svg></div>
<div class="tc red" style="left:802px;top:153.5px;width:40px;height:24px;padding:1px 2px 0 2px;font-size:12px;line-height:14px;padding-left:1px;">07.01</div>
<div class="tc" style="left:10px;top:178.0px;width:32px;height:24.5px;background:#efefef"></div>
<div class="tc" style="left:127px;top:178.0px;width:66px;height:24.5px;background:#efefef"></div>
<div class="tc" style="left:194px;top:178.0px;width:49px;height:24.5px;background:#efefef"></div>
<div class="tc" style="left:244px;top:178.0px;width:76px;height:24.5px;background:#efefef"></div>
<div class="tc" style="left:321px;top:178.0px;width:98px;height:24.5px;background:#efefef"></div>
<div class="tc" style="left:420px;top:178.0px;width:72px;height:24.5px;background:#efefef"></div>
<div class="tc" style="left:493px;top:178.0px;width:74px;height:24.5px;background:#efefef"></div>
<div class="tc" style="left:568px;top:178.0px;width:21px;height:24.5px;background:#efefef"></div>
<div class="tc" style="left:590px;top:178.0px;width:75px;height:24.5px;background:#efefef"></div>
<div class="tc" style="left:666px;top:178.0px;width:43px;height:24.5px;background:#efefef"></div>
<div class="tc" style="left:710px;top:178.0px;width:22px;height:24.5px;background:#efefef"></div>
<div class="tc" style="left:733px;top:178.0px;width:22px;height:24.5px;background:#efefef"></div>
<div class="tc" style="left:756px;top:178.0px;width:22px;height:24.5px;background:#efefef"></div>
<div class="tc" style="left:779px;top:178.0px;width:22px;height:24.5px;background:#efefef"></div>
<div class="tc" style="left:802px;top:178.0px;width:40px;height:24.5px;background:#efefef"></div>
<div class="dots" style="left:14px;top:180.5px;background:#f7f7f7"><i style="left:1.2px"></i><i style="left:9.2px"></i><i style="left:17.2px"></i></div>
<div class="tc" style="left:127px;top:178.0px;width:66px;height:24px;padding:1px 2px 0 2px;font-size:12px;line-height:14px;">10.08.2007</div>
<div class="tc" style="left:194px;top:178.0px;width:49px;height:24px;padding:1px 2px 0 2px;font-size:12px;line-height:14px;">81-2018</div>
<div class="tc" style="left:244px;top:178.0px;width:76px;height:24px;padding:1px 2px 0 2px;font-size:12px;line-height:14px;">3OG-01.pdf</div>
<div class="tc" style="left:321px;top:178.0px;width:98px;height:24px;padding:1px 2px 0 2px;font-size:12px;line-height:14px;">Detailplan</div>
<div class="tc" style="left:420px;top:178.0px;width:72px;height:24px;padding:1px 2px 0 2px;font-size:12px;line-height:14px;">Karin Smith</div>
<div class="tc" style="left:493px;top:178.0px;width:74px;height:24px;padding:1px 2px 0 2px;font-size:12px;line-height:14px;"><span class="u">./proje</span>kte</div>
<div class="a" style="left:573.0px;top:181.2px;width:12px;height:11px;line-height:0"><svg width="12" height="11" viewBox="0 0 12 11"><path d="M0.8 6.5 L3.8 10.2 L11 0.6" fill="none" stroke="#7a7a7a" stroke-width="0.9"/></svg></div>
<div class="tc" style="left:666px;top:178.0px;width:43px;height:24px;padding:1px 2px 0 2px;font-size:12px;line-height:14px;text-align:right;padding-right:3px;">0,00</div>
<div class="a" style="left:715.25px;top:181.2px;width:12px;height:12px;line-height:0"><svg width="12" height="12" viewBox="0 0 12 12"><path d="M0.6 0.6 L11.1 11.1 M11.1 0.6 L0.6 11.1" fill="none" stroke="#6a6a6a" stroke-width="0.9"/></svg></div>
<div class="a" style="left:738.25px;top:181.2px;width:12px;height:12px;line-height:0"><svg width="12" height="12" viewBox="0 0 12 12"><path d="M0.6 0.6 L11.1 11.1 M11.1 0.6 L0.6 11.1" fill="none" stroke="#6a6a6a" stroke-width="0.9"/></svg></div>
<div class="a" style="left:761.5px;top:181.2px;width:12px;height:11px;line-height:0"><svg width="12" height="11" viewBox="0 0 12 11"><path d="M0.8 6.5 L3.8 10.2 L11 0.6" fill="none" stroke="#7a7a7a" stroke-width="0.9"/></svg></div>
<div class="a" style="left:784.25px;top:181.2px;width:12px;height:12px;line-height:0"><svg width="12" height="12" viewBox="0 0 12 12"><path d="M0.6 0.6 L11.1 11.1 M11.1 0.6 L0.6 11.1" fill="none" stroke="#6a6a6a" stroke-width="0.9"/></svg></div>
<div class="tc" style="left:802px;top:178.0px;width:40px;height:24px;padding:1px 2px 0 2px;font-size:12px;line-height:14px;padding-left:1px;">07.01</div>
<div class="tc" style="left:10px;top:202.5px;width:32px;height:24.5px;background:#fff"></div>
<div class="tc" style="left:127px;top:202.5px;width:66px;height:24.5px;background:#fff"></div>
<div class="tc" style="left:194px;top:202.5px;width:49px;height:24.5px;background:#fff"></div>
<div class="tc" style="left:244px;top:202.5px;width:76px;height:24.5px;background:#fff"></div>
<div class="tc" style="left:321px;top:202.5px;width:98px;height:24.5px;background:#fff"></div>
<div class="tc" style="left:420px;top:202.5px;width:72px;height:24.5px;background:#fff"></div>
<div class="tc" style="left:493px;top:202.5px;width:74px;height:24.5px;background:#fff"></div>
<div class="tc" style="left:568px;top:202.5px;width:21px;height:24.5px;background:#fff"></div>
<div class="tc" style="left:590px;top:202.5px;width:75px;height:24.5px;background:#fff"></div>
<div class="tc" style="left:666px;top:202.5px;width:43px;height:24.5px;background:#fff"></div>
<div class="tc" style="left:710px;top:202.5px;width:22px;height:24.5px;background:#fff"></div>
<div class="tc" style="left:733px;top:202.5px;width:22px;height:24.5px;background:#fff"></div>
<div class="tc" style="left:756px;top:202.5px;width:22px;height:24.5px;background:#fff"></div>
<div class="tc" style="left:779px;top:202.5px;width:22px;height:24.5px;background:#fff"></div>
<div class="tc" style="left:802px;top:202.5px;width:40px;height:24.5px;background:#fff"></div>
<div class="dots" style="left:14px;top:205.0px;background:#fff"><i style="left:1.2px"></i><i style="left:9.2px"></i><i style="left:17.2px"></i></div>
<div class="tc" style="left:127px;top:202.5px;width:66px;height:24px;padding:1px 2px 0 2px;font-size:12px;line-height:14px;">10.08.2007</div>
<div class="tc" style="left:194px;top:202.5px;width:49px;height:24px;padding:1px 2px 0 2px;font-size:12px;line-height:14px;">85-2018</div>
<div class="tc" style="left:244px;top:202.5px;width:76px;height:24px;padding:1px 2px 0 2px;font-size:12px;line-height:14px;">3OG-02.pdf</div>
<div class="tc" style="left:321px;top:202.5px;width:98px;height:24px;padding:1px 2px 0 2px;font-size:12px;line-height:14px;">Bebauungsplan</div>
<div class="tc" style="left:420px;top:202.5px;width:72px;height:24px;padding:1px 2px 0 2px;font-size:12px;line-height:14px;"><span class="u">K</span>athleen</div>
<div class="tc" style="left:493px;top:202.5px;width:74px;height:24px;padding:1px 2px 0 2px;font-size:12px;line-height:14px;"><span class="u">./proje</span>kte</div>
<div class="a" style="left:573.0px;top:205.7px;width:12px;height:11px;line-height:0"><svg width="12" height="11" viewBox="0 0 12 11"><path d="M0.8 6.5 L3.8 10.2 L11 0.6" fill="none" stroke="#7a7a7a" stroke-width="0.9"/></svg></div>
<div class="tc" style="left:590px;top:202.5px;width:75px;height:24px;padding:1px 2px 0 2px;font-size:12px;line-height:14px;text-align:center;">30.04.2018</div>
<div class="tc" style="left:666px;top:202.5px;width:43px;height:24px;padding:1px 2px 0 2px;font-size:12px;line-height:14px;text-align:right;padding-right:3px;">0,00</div>
<div class="a" style="left:715.25px;top:205.7px;width:12px;height:12px;line-height:0"><svg width="12" height="12" viewBox="0 0 12 12"><path d="M0.6 0.6 L11.1 11.1 M11.1 0.6 L0.6 11.1" fill="none" stroke="#6a6a6a" stroke-width="0.9"/></svg></div>
<div class="a" style="left:738.25px;top:205.7px;width:12px;height:12px;line-height:0"><svg width="12" height="12" viewBox="0 0 12 12"><path d="M0.6 0.6 L11.1 11.1 M11.1 0.6 L0.6 11.1" fill="none" stroke="#6a6a6a" stroke-width="0.9"/></svg></div>
<div class="a" style="left:761.5px;top:205.7px;width:12px;height:11px;line-height:0"><svg width="12" height="11" viewBox="0 0 12 11"><path d="M0.8 6.5 L3.8 10.2 L11 0.6" fill="none" stroke="#7a7a7a" stroke-width="0.9"/></svg></div>
<div class="a" style="left:784.25px;top:205.7px;width:12px;height:12px;line-height:0"><svg width="12" height="12" viewBox="0 0 12 12"><path d="M0.6 0.6 L11.1 11.1 M11.1 0.6 L0.6 11.1" fill="none" stroke="#6a6a6a" stroke-width="0.9"/></svg></div>
<div class="tc" style="left:802px;top:202.5px;width:40px;height:24px;padding:1px 2px 0 2px;font-size:12px;line-height:14px;padding-left:1px;">07.01</div>
<div class="tc" style="left:10px;top:227.0px;width:32px;height:24.5px;background:#efefef"></div>
<div class="tc" style="left:127px;top:227.0px;width:66px;height:24.5px;background:#efefef"></div>
<div class="tc" style="left:194px;top:227.0px;width:49px;height:24.5px;background:#efefef"></div>
<div class="tc" style="left:244px;top:227.0px;width:76px;height:24.5px;background:#efefef"></div>
<div class="tc" style="left:321px;top:227.0px;width:98px;height:24.5px;background:#efefef"></div>
<div class="tc" style="left:420px;top:227.0px;width:72px;height:24.5px;background:#efefef"></div>
<div class="tc" style="left:493px;top:227.0px;width:74px;height:24.5px;background:#efefef"></div>
<div class="tc" style="left:568px;top:227.0px;width:21px;height:24.5px;background:#efefef"></div>
<div class="tc" style="left:590px;top:227.0px;width:75px;height:24.5px;background:#efefef"></div>
<div class="tc" style="left:666px;top:227.0px;width:43px;height:24.5px;background:#efefef"></div>
<div class="tc" style="left:710px;top:227.0px;width:22px;height:24.5px;background:#efefef"></div>
<div class="tc" style="left:733px;top:227.0px;width:22px;height:24.5px;background:#efefef"></div>
<div class="tc" style="left:756px;top:227.0px;width:22px;height:24.5px;background:#efefef"></div>
<div class="tc" style="left:779px;top:227.0px;width:22px;height:24.5px;background:#efefef"></div>
<div class="tc" style="left:802px;top:227.0px;width:40px;height:24.5px;background:#efefef"></div>
<div class="dots" style="left:14px;top:229.5px;background:#f7f7f7"><i style="left:1.2px"></i><i style="left:9.2px"></i><i style="left:17.2px"></i></div>
<div class="tc red" style="left:127px;top:227.0px;width:66px;height:24px;padding:1px 2px 0 2px;font-size:12px;line-height:14px;">10.08.2007</div>
<div class="tc red" style="left:244px;top:227.0px;width:76px;height:24px;padding:1px 2px 0 2px;font-size:12px;line-height:14px;">4OG-01.pdf</div>
<div class="tc red" style="left:493px;top:227.0px;width:74px;height:24px;padding:1px 2px 0 2px;font-size:12px;line-height:14px;"><span class="u">./proje</span>kte</div>
<div class="a" style="left:573.0px;top:230.2px;width:12px;height:11px;line-height:0"><svg width="12" height="11" viewBox="0 0 12 11"><path d="M0.8 6.5 L3.8 10.2 L11 0.6" fill="none" stroke="#7a7a7a" stroke-width="0.9"/></svg></div>
<div class="tc red" style="left:666px;top:227.0px;width:43px;height:24px;padding:1px 2px 0 2px;font-size:12px;line-height:14px;text-align:right;padding-right:3px;">0,00</div>
<div class="a" style="left:715.25px;top:230.2px;width:12px;height:12px;line-height:0"><svg width="12" height="12" viewBox="0 0 12 12"><path d="M0.6 0.6 L11.1 11.1 M11.1 0.6 L0.6 11.1" fill="none" stroke="#6a6a6a" stroke-width="0.9"/></svg></div>
<div class="a" style="left:738.25px;top:230.2px;width:12px;height:12px;line-height:0"><svg width="12" height="12" viewBox="0 0 12 12"><path d="M0.6 0.6 L11.1 11.1 M11.1 0.6 L0.6 11.1" fill="none" stroke="#6a6a6a" stroke-width="0.9"/></svg></div>
<div class="a" style="left:761.25px;top:230.2px;width:12px;height:12px;line-height:0"><svg width="12" height="12" viewBox="0 0 12 12"><path d="M0.6 0.6 L11.1 11.1 M11.1 0.6 L0.6 11.1" fill="none" stroke="#6a6a6a" stroke-width="0.9"/></svg></div>
<div class="a" style="left:784.5px;top:230.2px;width:12px;height:11px;line-height:0"><svg width="12" height="11" viewBox="0 0 12 11"><path d="M0.8 6.5 L3.8 10.2 L11 0.6" fill="none" stroke="#7a7a7a" stroke-width="0.9"/></svg></div>
<div class="tc red" style="left:802px;top:227.0px;width:40px;height:24px;padding:1px 2px 0 2px;font-size:12px;line-height:14px;padding-left:1px;">07.01</div>
<div class="tc" style="left:10px;top:251.5px;width:32px;height:24.5px;background:#fff"></div>
<div class="tc" style="left:127px;top:251.5px;width:66px;height:24.5px;background:#fff"></div>
<div class="tc" style="left:194px;top:251.5px;width:49px;height:24.5px;background:#fff"></div>
<div class="tc" style="left:244px;top:251.5px;width:76px;height:24.5px;background:#fff"></div>
<div class="tc" style="left:321px;top:251.5px;width:98px;height:24.5px;background:#fff"></div>
<div class="tc" style="left:420px;top:251.5px;width:72px;height:24.5px;background:#fff"></div>
<div class="tc" style="left:493px;top:251.5px;width:74px;height:24.5px;background:#fff"></div>
<div class="tc" style="left:568px;top:251.5px;width:21px;height:24.5px;background:#fff"></div>
<div class="tc" style="left:590px;top:251.5px;width:75px;height:24.5px;background:#fff"></div>
<div class="tc" style="left:666px;top:251.5px;width:43px;height:24.5px;background:#fff"></div>
<div class="tc" style="left:710px;top:251.5px;width:22px;height:24.5px;background:#fff"></div>
<div class="tc" style="left:733px;top:251.5px;width:22px;height:24.5px;background:#fff"></div>
<div class="tc" style="left:756px;top:251.5px;width:22px;height:24.5px;background:#fff"></div>
<div class="tc" style="left:779px;top:251.5px;width:22px;height:24.5px;background:#fff"></div>
<div class="tc" style="left:802px;top:251.5px;width:40px;height:24.5px;background:#fff"></div>
<div class="dots" style="left:14px;top:254.0px;background:#fff"><i style="left:1.2px"></i><i style="left:9.2px"></i><i style="left:17.2px"></i></div>
<div class="tc red" style="left:127px;top:251.5px;width:66px;height:24px;padding:1px 2px 0 2px;font-size:12px;line-height:14px;">10.08.2007</div>
<div class="tc red" style="left:244px;top:251.5px;width:76px;height:24px;padding:1px 2px 0 2px;font-size:12px;line-height:14px;">4OG-02.pdf</div>
<div class="tc red" style="left:493px;top:251.5px;width:74px;height:24px;padding:1px 2px 0 2px;font-size:12px;line-height:14px;"><span class="u">./proje</span>kte</div>
<div class="a" style="left:573.0px;top:254.7px;width:12px;height:11px;line-height:0"><svg width="12" height="11" viewBox="0 0 12 11"><path d="M0.8 6.5 L3.8 10.2 L11 0.6" fill="none" stroke="#7a7a7a" stroke-width="0.9"/></svg></div>
<div class="tc red" style="left:666px;top:251.5px;width:43px;height:24px;padding:1px 2px 0 2px;font-size:12px;line-height:14px;text-align:right;padding-right:3px;">0,00</div>
<div class="a" style="left:715.25px;top:254.7px;width:12px;height:12px;line-height:0"><svg width="12" height="12" viewBox="0 0 12 12"><path d="M0.6 0.6 L11.1 11.1 M11.1 0.6 L0.6 11.1" fill="none" stroke="#6a6a6a" stroke-width="0.9"/></svg></div>
<div class="a" style="left:738.25px;top:254.7px;width:12px;height:12px;line-height:0"><svg width="12" height="12" viewBox="0 0 12 12"><path d="M0.6 0.6 L11.1 11.1 M11.1 0.6 L0.6 11.1" fill="none" stroke="#6a6a6a" stroke-width="0.9"/></svg></div>
<div class="a" style="left:761.25px;top:254.7px;width:12px;height:12px;line-height:0"><svg width="12" height="12" viewBox="0 0 12 12"><path d="M0.6 0.6 L11.1 11.1 M11.1 0.6 L0.6 11.1" fill="none" stroke="#6a6a6a" stroke-width="0.9"/></svg></div>
<div class="a" style="left:784.5px;top:254.7px;width:12px;height:11px;line-height:0"><svg width="12" height="11" viewBox="0 0 12 11"><path d="M0.8 6.5 L3.8 10.2 L11 0.6" fill="none" stroke="#7a7a7a" stroke-width="0.9"/></svg></div>
<div class="tc red" style="left:802px;top:251.5px;width:40px;height:24px;padding:1px 2px 0 2px;font-size:12px;line-height:14px;padding-left:1px;">07.01</div>
<div class="tc" style="left:10px;top:276.0px;width:32px;height:24.5px;background:#efefef"></div>
<div class="tc" style="left:127px;top:276.0px;width:66px;height:24.5px;background:#efefef"></div>
<div class="tc" style="left:194px;top:276.0px;width:49px;height:24.5px;background:#efefef"></div>
<div class="tc" style="left:244px;top:276.0px;width:76px;height:24.5px;background:#efefef"></div>
<div class="tc" style="left:321px;top:276.0px;width:98px;height:24.5px;background:#efefef"></div>
<div class="tc" style="left:420px;top:276.0px;width:72px;height:24.5px;background:#efefef"></div>
<div class="tc" style="left:493px;top:276.0px;width:74px;height:24.5px;background:#efefef"></div>
<div class="tc" style="left:568px;top:276.0px;width:21px;height:24.5px;background:#efefef"></div>
<div class="tc" style="left:590px;top:276.0px;width:75px;height:24.5px;background:#efefef"></div>
<div class="tc" style="left:666px;top:276.0px;width:43px;height:24.5px;background:#efefef"></div>
<div class="tc" style="left:710px;top:276.0px;width:22px;height:24.5px;background:#efefef"></div>
<div class="tc" style="left:733px;top:276.0px;width:22px;height:24.5px;background:#efefef"></div>
<div class="tc" style="left:756px;top:276.0px;width:22px;height:24.5px;background:#efefef"></div>
<div class="tc" style="left:779px;top:276.0px;width:22px;height:24.5px;background:#efefef"></div>
<div class="tc" style="left:802px;top:276.0px;width:40px;height:24.5px;background:#efefef"></div>
<div class="dots" style="left:14px;top:278.5px;background:#f7f7f7"><i style="left:1.2px"></i><i style="left:9.2px"></i><i style="left:17.2px"></i></div>
<div class="tc" style="left:127px;top:276.0px;width:66px;height:24px;padding:1px 2px 0 2px;font-size:12px;line-height:14px;">12.09.2017</div>
<div class="tc" style="left:194px;top:276.0px;width:49px;height:24px;padding:1px 2px 0 2px;font-size:12px;line-height:14px;">134</div>
<div class="tc" style="left:244px;top:276.0px;width:76px;height:24px;padding:1px 2px 0 2px;font-size:12px;line-height:14px;">Änderung</div>
<div class="tc" style="left:321px;top:276.0px;width:98px;height:24px;padding:1px 2px 0 2px;font-size:12px;line-height:14px;">Ausführungsplan</div>
<div class="tc" style="left:420px;top:276.0px;width:72px;height:24px;padding:1px 2px 0 2px;font-size:12px;line-height:14px;">Ingrid Stick</div>
<div class="a" style="left:572.75px;top:279.20000000000005px;width:12px;height:12px;line-height:0"><svg width="12" height="12" viewBox="0 0 12 12"><path d="M0.6 0.6 L11.1 11.1 M11.1 0.6 L0.6 11.1" fill="none" stroke="#6a6a6a" stroke-width="0.9"/></svg></div>
<div class="tc" style="left:666px;top:276.0px;width:43px;height:24px;padding:1px 2px 0 2px;font-size:12px;line-height:14px;text-align:right;padding-right:3px;">0,00</div>
<div class="a" style="left:715.25px;top:279.20000000000005px;width:12px;height:12px;line-height:0"><svg width="12" height="12" viewBox="0 0 12 12"><path d="M0.6 0.6 L11.1 11.1 M11.1 0.6 L0.6 11.1" fill="none" stroke="#6a6a6a" stroke-width="0.9"/></svg></div>
<div class="a" style="left:738.25px;top:279.20000000000005px;width:12px;height:12px;line-height:0"><svg width="12" height="12" viewBox="0 0 12 12"><path d="M0.6 0.6 L11.1 11.1 M11.1 0.6 L0.6 11.1" fill="none" stroke="#6a6a6a" stroke-width="0.9"/></svg></div>
<div class="a" style="left:761.5px;top:279.20000000000005px;width:12px;height:11px;line-height:0"><svg width="12" height="11" viewBox="0 0 12 11"><path d="M0.8 6.5 L3.8 10.2 L11 0.6" fill="none" stroke="#7a7a7a" stroke-width="0.9"/></svg></div>
<div class="a" style="left:784.25px;top:279.20000000000005px;width:12px;height:12px;line-height:0"><svg width="12" height="12" viewBox="0 0 12 12"><path d="M0.6 0.6 L11.1 11.1 M11.1 0.6 L0.6 11.1" fill="none" stroke="#6a6a6a" stroke-width="0.9"/></svg></div>
<div class="tc" style="left:802px;top:276.0px;width:40px;height:24px;padding:1px 2px 0 2px;font-size:12px;line-height:14px;padding-left:1px;">12.09</div>
<div class="tc" style="left:10px;top:300.5px;width:32px;height:24.5px;background:#fff"></div>
<div class="tc" style="left:127px;top:300.5px;width:66px;height:24.5px;background:#fff"></div>
<div class="tc" style="left:194px;top:300.5px;width:49px;height:24.5px;background:#fff"></div>
<div class="tc" style="left:244px;top:300.5px;width:76px;height:24.5px;background:#fff"></div>
<div class="tc" style="left:321px;top:300.5px;width:98px;height:24.5px;background:#fff"></div>
<div class="tc" style="left:420px;top:300.5px;width:72px;height:24.5px;background:#fff"></div>
<div class="tc" style="left:493px;top:300.5px;width:74px;height:24.5px;background:#fff"></div>
<div class="tc" style="left:568px;top:300.5px;width:21px;height:24.5px;background:#fff"></div>
<div class="tc" style="left:590px;top:300.5px;width:75px;height:24.5px;background:#fff"></div>
<div class="tc" style="left:666px;top:300.5px;width:43px;height:24.5px;background:#fff"></div>
<div class="tc" style="left:710px;top:300.5px;width:22px;height:24.5px;background:#fff"></div>
<div class="tc" style="left:733px;top:300.5px;width:22px;height:24.5px;background:#fff"></div>
<div class="tc" style="left:756px;top:300.5px;width:22px;height:24.5px;background:#fff"></div>
<div class="tc" style="left:779px;top:300.5px;width:22px;height:24.5px;background:#fff"></div>
<div class="tc" style="left:802px;top:300.5px;width:40px;height:24.5px;background:#fff"></div>
<div class="dots" style="left:14px;top:303.0px;background:#fff"><i style="left:1.2px"></i><i style="left:9.2px"></i><i style="left:17.2px"></i></div>
<div class="tc" style="left:127px;top:300.5px;width:66px;height:24px;padding:1px 2px 0 2px;font-size:12px;line-height:14px;">10.08.2007</div>
<div class="tc" style="left:194px;top:300.5px;width:49px;height:24px;padding:1px 2px 0 2px;font-size:12px;line-height:14px;">78-2018</div>
<div class="tc" style="left:244px;top:300.5px;width:76px;height:24px;padding:1px 2px 0 2px;font-size:12px;line-height:14px;"><span class="u">A</span>nsichten-</div>
<div class="tc" style="left:321px;top:300.5px;width:98px;height:24px;padding:1px 2px 0 2px;font-size:12px;line-height:14px;"><span class="u">E</span>xterner</div>
<div class="tc" style="left:420px;top:300.5px;width:72px;height:24px;padding:1px 2px 0 2px;font-size:12px;line-height:14px;"><span class="u">An</span>dreas</div>
<div class="tc" style="left:493px;top:300.5px;width:74px;height:24px;padding:1px 2px 0 2px;font-size:12px;line-height:14px;"><span class="u">./proje</span>kte</div>
<div class="a" style="left:573.0px;top:303.70000000000005px;width:12px;height:11px;line-height:0"><svg width="12" height="11" viewBox="0 0 12 11"><path d="M0.8 6.5 L3.8 10.2 L11 0.6" fill="none" stroke="#7a7a7a" stroke-width="0.9"/></svg></div>
<div class="tc" style="left:590px;top:300.5px;width:75px;height:24px;padding:1px 2px 0 2px;font-size:12px;line-height:14px;text-align:center;">27.04.2018</div>
<div class="tc" style="left:666px;top:300.5px;width:43px;height:24px;padding:1px 2px 0 2px;font-size:12px;line-height:14px;text-align:right;padding-right:3px;">0,00</div>
<div class="a" style="left:715.25px;top:303.70000000000005px;width:12px;height:12px;line-height:0"><svg width="12" height="12" viewBox="0 0 12 12"><path d="M0.6 0.6 L11.1 11.1 M11.1 0.6 L0.6 11.1" fill="none" stroke="#6a6a6a" stroke-width="0.9"/></svg></div>
<div class="a" style="left:738.25px;top:303.70000000000005px;width:12px;height:12px;line-height:0"><svg width="12" height="12" viewBox="0 0 12 12"><path d="M0.6 0.6 L11.1 11.1 M11.1 0.6 L0.6 11.1" fill="none" stroke="#6a6a6a" stroke-width="0.9"/></svg></div>
<div class="a" style="left:761.5px;top:303.70000000000005px;width:12px;height:11px;line-height:0"><svg width="12" height="11" viewBox="0 0 12 11"><path d="M0.8 6.5 L3.8 10.2 L11 0.6" fill="none" stroke="#7a7a7a" stroke-width="0.9"/></svg></div>
<div class="a" style="left:784.25px;top:303.70000000000005px;width:12px;height:12px;line-height:0"><svg width="12" height="12" viewBox="0 0 12 12"><path d="M0.6 0.6 L11.1 11.1 M11.1 0.6 L0.6 11.1" fill="none" stroke="#6a6a6a" stroke-width="0.9"/></svg></div>
<div class="tc" style="left:802px;top:300.5px;width:40px;height:24px;padding:1px 2px 0 2px;font-size:12px;line-height:14px;padding-left:1px;">07.01</div>
</div>
<div class="a" style="left:217px;top:581px;font-size:12px;color:#222">Seite 1 von 2</div>
<svg class="a" style="left:522px;top:582px" width="40" height="15" viewBox="0 0 40 15"><path d="M3.2 0.9 L14.1 6.9 L3.2 12.9" fill="none" stroke="#555" stroke-width="1"/><path d="M24 2.2 L29.4 6.9 L24 11.5 M27.4 0.9 L34 6.9 L27.4 12.9" fill="none" stroke="#555" stroke-width="1"/><path d="M36 0.9 V12.9" stroke="#aaa" stroke-width="1.6"/></svg>
<div class="a" style="left:128px;top:612px;font-size:12px;color:#222">Gesamt 17 Zeilen</div>
<div class="a" style="left:110px;top:646px;width:832px;height:16px;background:#f0f0f0"></div>
<div class="a" style="left:126px;top:646px;width:636px;height:16px;background:#c8c8c8"></div>
<svg class="a" style="left:113px;top:649px" width="10" height="10" viewBox="0 0 10 10"><path d="M7 1.5 L3 5 L7 8.5" fill="none" stroke="#505050" stroke-width="2"/></svg>
<svg class="a" style="left:928px;top:649px" width="10" height="10" viewBox="0 0 10 10"><path d="M3 1.5 L7 5 L3 8.5" fill="none" stroke="#505050" stroke-width="2"/></svg>
<div class="a" style="left:967px;top:105px;font-size:12.3px;color:#222;line-height:15px">Klicken Sie einen Eintrag an, um die<br>Details hier angezeigt zu bekommen.</div>
<div class="a" style="left:967px;top:142px;font-size:12.3px;color:#222">Doppelklick zum Editieren.</div>
<div class="a" style="left:967px;top:184px;font-size:12px;font-weight:bold;color:#222;line-height:15px">2016-100 Reihenhäuser Südstadt In<br>Bearbeitung</div>
<div class="btn" style="left:968px;top:218px;width:162px;height:21px">Pläne ohne Plan Nr. löschen</div>
<div class="btn" style="left:968px;top:244px;width:150px;height:21px">Gelöschte Pläne anzeigen</div>
<div class="a" style="left:967px;top:283px;font-size:12.3px;color:#555">Projektpfad:</div>
<div class="a" style="left:967px;top:301px;width:237px;height:50px;background:#f0f0f0;border:1px solid #dedede;border-radius:2px;text-align:center;font-size:12.2px;line-height:15.5px;color:#222;padding-top:1px">//192.168.2.87/untermStrichX2demo<br>/datapath/projekte/2016-100/CAD/Plaene/<br><svg width="14" height="11" viewBox="0 0 14 11"><path d="M0.5 2.5 v8 h11 l2-6 h-10 l-2 6 M0.5 2.5 h4 l1 -1.5 h3 v3" fill="none" stroke="#777" stroke-width="0.9"/></svg></div>
<div class="btn" style="left:968px;top:381px;width:236px;height:36px;line-height:15px;padding-top:3px;white-space:normal;color:#333">&#8203;<svg width="10" height="13" viewBox="0 0 10 13" style="vertical-align:-2px;margin:0 3px 0 2px"><path d="M2 4 q0 -3 3 -3 q3 0 3 3 q0 2 -3 3.5 v2" fill="none" stroke="#666" stroke-width="1"/><circle cx="5" cy="11.5" r="0.9" fill="#666"/></svg> Hilfe zu "Automatisches Einlesen aus dem Planverzeichnis"</div>
</body></html>
